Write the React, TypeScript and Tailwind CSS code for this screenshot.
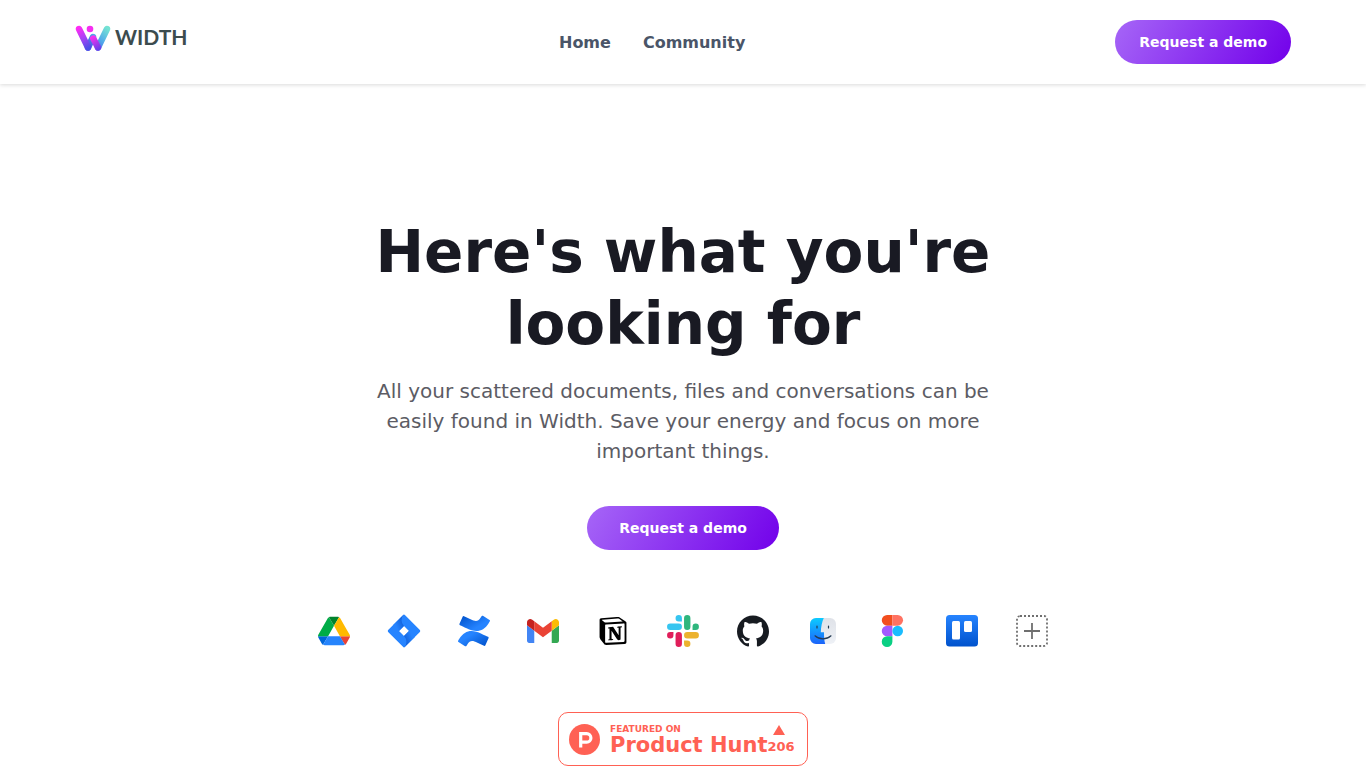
import { SiGithub, SiNotion } from "react-icons/si";

function WidthLogo() {
  return (
    <a href="#" aria-label="Width home" className="flex w-[114px] items-center gap-1 pb-2">
      <svg viewBox="0 0 36 28" className="h-7 w-9 shrink-0" fill="none" strokeLinecap="round" aria-hidden="true">
        <defs>
          <linearGradient id="logo-left" gradientUnits="userSpaceOnUse" x1="3" y1="4" x2="14" y2="24">
            <stop stopColor="#ff2bf4" />
            <stop offset="0.5" stopColor="#a743f5" />
            <stop offset="1" stopColor="#4a4ee6" />
          </linearGradient>
          <linearGradient id="logo-right" gradientUnits="userSpaceOnUse" x1="32" y1="4" x2="14" y2="24">
            <stop stopColor="#74e3d3" />
            <stop offset="0.5" stopColor="#51a9ea" />
            <stop offset="1" stopColor="#4b47e8" />
          </linearGradient>
          <linearGradient id="logo-middle" gradientUnits="userSpaceOnUse" x1="17" y1="13" x2="24" y2="25">
            <stop stopColor="#fb31ed" />
            <stop offset="1" stopColor="#693eea" />
          </linearGradient>
        </defs>
        <path d="M13 23.5 18 13" stroke="url(#logo-right)" strokeWidth="6.4" />
        <path d="M32 5 23 23.5" stroke="url(#logo-right)" strokeWidth="6.4" />
        <path d="M4 5 13 23.5" stroke="url(#logo-left)" strokeWidth="6.4" />
        <path d="M18.3 14.5 23 23.5" stroke="url(#logo-middle)" strokeWidth="6.4" />
        <circle cx="15" cy="5" r="3.3" fill="#f52ef0" />
      </svg>
      <span className="pb-0.5 font-['Lato',sans-serif] text-[21px] leading-6 font-bold text-[#3c4c4e]">WIDTH</span>
    </a>
  );
}

function DriveIcon() {
  return (
    <svg viewBox="0 0 87.3 78" className="size-8" role="img" aria-label="Google Drive">
      <path d="m6.6 66.85 3.85 6.65c.8 1.4 1.95 2.5 3.3 3.3l13.75-23.8h-27.5c0 1.55.4 3.1 1.2 4.5z" fill="#0066da" />
      <path d="m43.65 25-13.75-23.8c-1.35.8-2.5 1.9-3.3 3.3l-25.4 44a9.06 9.06 0 0 0 -1.2 4.5h27.5z" fill="#00ac47" />
      <path d="m73.55 76.8c1.35-.8 2.5-1.9 3.3-3.3l1.6-2.75 7.65-13.25c.8-1.4 1.2-2.95 1.2-4.5h-27.5l5.85 11.5z" fill="#ea4335" />
      <path d="m43.65 25 13.75-23.8c-1.35-.8-2.9-1.2-4.5-1.2h-18.5c-1.6 0-3.15.45-4.5 1.2z" fill="#00832d" />
      <path d="m59.8 53h-32.3l-13.75 23.8c1.35.8 2.9 1.2 4.5 1.2h50.8c1.6 0 3.15-.45 4.5-1.2z" fill="#2684fc" />
      <path d="m73.4 26.5-12.7-22c-.8-1.4-1.95-2.5-3.3-3.3l-13.75 23.8 16.15 28h27.45c0-1.55-.4-3.1-1.2-4.5z" fill="#ffba00" />
    </svg>
  );
}

function JiraIcon() {
  return (
    <svg viewBox="0 0 216.7 224" className="size-8 scale-105" role="img" aria-label="Jira">
      <defs>
        <linearGradient id="jira-a" x1="0.9" y1="0.35" x2="0.3" y2="0.75">
          <stop offset="0.1" stopColor="#1463dc" />
          <stop offset="1" stopColor="#2684ff" />
        </linearGradient>
        <linearGradient id="jira-b" x1="0.1" y1="0.65" x2="0.7" y2="0.25">
          <stop offset="0.1" stopColor="#1463dc" />
          <stop offset="1" stopColor="#2684ff" />
        </linearGradient>
      </defs>
      <path
        d="M214.06 105.73 117.67 9.34 108.33 0 2.59 105.73a8.89 8.89 0 0 0 0 12.54L108.33 224l105.73-105.68a8.87 8.87 0 0 0 0-12.59ZM108.33 145.12 75.21 112l33.12-33.12L141.44 112Z"
        fill="#2684ff"
      />
      <path d="M108.33 78.88A55.75 55.75 0 0 1 108.09.26L35.62 72.71l39.45 39.44Z" fill="url(#jira-a)" />
      <path d="m141.53 111.91-33.2 33.21a55.77 55.77 0 0 1 0 78.86l72.65-72.62Z" fill="url(#jira-b)" />
    </svg>
  );
}

const CONFLUENCE_WAVE =
  "M9.26 187.33c-2.64 4.31-5.61 9.3-8.13 13.29a8.100 8.100 0 0 0 2.720 11.050l52.830 32.510a8.130 8.130 0 0 0 11.250-2.770c2.120-3.530 4.840-8.120 7.810-13.040 20.920-34.540 41.970-30.310 79.920-12.190l52.380 24.910a8.130 8.130 0 0 0 10.930-4.070l25.150-56.880a8.130 8.130 0 0 0-4.060-10.650c-11.060-5.200-33.040-15.560-52.820-25.110C116.060 109.800 55.560 112.040 9.260 187.330Z";

function ConfluenceIcon() {
  return (
    <svg viewBox="0 0 256 246" className="size-8" role="img" aria-label="Confluence">
      <defs>
        <linearGradient id="confluence" x1="1" y1="0.9" x2="0.25" y2="0.3">
          <stop stopColor="#0052cc" />
          <stop offset="0.9" stopColor="#2684ff" />
        </linearGradient>
      </defs>
      <path d={CONFLUENCE_WAVE} fill="url(#confluence)" />
      <path d={CONFLUENCE_WAVE} fill="url(#confluence)" transform="rotate(180 128 123)" />
    </svg>
  );
}

function GmailIcon() {
  return (
    <svg viewBox="52 42 88 66" className="size-8" role="img" aria-label="Gmail">
      <path fill="#4285f4" d="M58 108h14V74L52 59v43c0 3.32 2.69 6 6 6" />
      <path fill="#34a853" d="M120 108h14c3.32 0 6-2.69 6-6V59l-20 15" />
      <path fill="#fbbc04" d="M120 48v26l20-15v-8c0-7.42-8.47-11.65-14.4-7.2" />
      <path fill="#ea4335" d="M72 74V48l24 18 24-18v26L96 92" />
      <path fill="#c5221f" d="M52 51v8l20 15V48l-5.6-4.2c-5.94-4.45-14.4-.22-14.4 7.2" />
    </svg>
  );
}

function SlackIcon() {
  return (
    <svg viewBox="0 0 53.8 54" className="size-8" role="img" aria-label="Slack">
      <path fill="#36c5f0" d="M19.712.133a5.381 5.381 0 0 0-5.376 5.387 5.381 5.381 0 0 0 5.376 5.386h5.376V5.52A5.381 5.381 0 0 0 19.712.133m0 14.365H5.376A5.381 5.381 0 0 0 0 19.884a5.381 5.381 0 0 0 5.376 5.387h14.336a5.381 5.381 0 0 0 5.376-5.387 5.381 5.381 0 0 0-5.376-5.386" />
      <path fill="#2eb67d" d="M53.76 19.884a5.381 5.381 0 0 0-5.376-5.386 5.381 5.381 0 0 0-5.376 5.386v5.387h5.376a5.381 5.381 0 0 0 5.376-5.387m-14.336 0V5.52A5.381 5.381 0 0 0 34.048.133a5.381 5.381 0 0 0-5.376 5.387v14.364a5.381 5.381 0 0 0 5.376 5.387 5.381 5.381 0 0 0 5.376-5.387" />
      <path fill="#ecb22e" d="M34.048 54a5.381 5.381 0 0 0 5.376-5.387 5.381 5.381 0 0 0-5.376-5.386h-5.376v5.386A5.381 5.381 0 0 0 34.048 54m0-14.365h14.336a5.381 5.381 0 0 0 5.376-5.386 5.381 5.381 0 0 0-5.376-5.387H34.048a5.381 5.381 0 0 0-5.376 5.387 5.381 5.381 0 0 0 5.376 5.386" />
      <path fill="#e01e5a" d="M0 34.249a5.381 5.381 0 0 0 5.376 5.386 5.381 5.381 0 0 0 5.376-5.386v-5.387H5.376A5.381 5.381 0 0 0 0 34.25m14.336-.001v14.364A5.381 5.381 0 0 0 19.712 54a5.381 5.381 0 0 0 5.376-5.387V34.25a5.381 5.381 0 0 0-5.376-5.387 5.381 5.381 0 0 0-5.376 5.387" />
    </svg>
  );
}

function FinderIcon() {
  return (
    <svg viewBox="0 0 32 32" className="size-8" role="img" aria-label="Finder">
      <defs>
        <linearGradient id="finder-face" x1="0" y1="0" x2="0" y2="1">
          <stop stopColor="#0cccff" />
          <stop offset="1" stopColor="#1c63fa" />
        </linearGradient>
        <linearGradient id="finder-side" x1="0" y1="0" x2="0" y2="1">
          <stop stopColor="#dfe2e8" />
          <stop offset="1" stopColor="#eef1f6" />
        </linearGradient>
      </defs>
      <rect x="3" y="3" width="26" height="26" rx="6" fill="url(#finder-side)" />
      <path d="M9 3h7.800c-1.800 4-2.800 8.500-3 14.200h3.200c-.1 4.500.3 8.500 1.200 11.800H9a6 6 0 0 1-6-6V9a6 6 0 0 1 6-6Z" fill="url(#finder-face)" />
      <path d="M10 11v2M21.500 11v2" stroke="#243b53" strokeWidth="1.200" strokeLinecap="round" />
      <path d="M8 20.800c4.500 4.200 11.500 4.200 16 0" fill="none" stroke="#243b53" strokeWidth="1.200" strokeLinecap="round" />
    </svg>
  );
}

function FigmaIcon() {
  return (
    <svg viewBox="0 0 32 32" className="size-8" role="img" aria-label="Figma">
      <path d="M11.100 0h5.300v10.670h-5.300a5.330 5.330 0 0 1 0-10.670Z" fill="#f24e1e" />
      <path d="M16.400 0h5.300a5.330 5.330 0 0 1 0 10.670h-5.300Z" fill="#ff7262" />
      <path d="M11.100 10.670h5.300v10.660h-5.300a5.330 5.330 0 0 1 0-10.660Z" fill="#a259ff" />
      <circle cx="21.700" cy="16" r="5.330" fill="#1abcfe" />
      <path d="M11.100 21.330h5.300v5.340a5.330 5.330 0 1 1-5.300-5.340Z" fill="#0acf83" />
    </svg>
  );
}

function TrelloIcon() {
  return (
    <svg viewBox="0 0 32 32" className="size-8" role="img" aria-label="Trello">
      <defs>
        <linearGradient id="trello" x1="0" y1="0" x2="0" y2="1">
          <stop stopColor="#2684ff" />
          <stop offset="1" stopColor="#0052cc" />
        </linearGradient>
      </defs>
      <rect width="32" height="31.500" rx="3.500" fill="url(#trello)" />
      <rect x="6" y="6" width="8" height="18.500" rx="1.500" fill="#fff" />
      <rect x="18" y="6" width="8" height="11" rx="1.500" fill="#fff" />
    </svg>
  );
}

function MoreIcon() {
  return (
    <svg viewBox="0 0 32 32" className="size-8" fill="none" stroke="#6f6f6f" role="img" aria-label="More integrations">
      <rect x="1" y="1" width="30" height="30" rx="3" strokeWidth="1.800" strokeDasharray="2 2" />
      <path d="M16 8v16M8 16h16" strokeWidth="1.800" />
    </svg>
  );
}

function ProductHuntBadge() {
  return (
    <a
      href="#"
      className="flex h-[54px] w-[250px] items-center rounded-[10px] border border-[#ff6154] pl-2.5 text-[#ff6154]"
    >
      <svg viewBox="0 0 31 31" className="mr-2.5 size-[31px] shrink-0" aria-hidden="true">
        <circle cx="15.500" cy="15.500" r="15.500" fill="currentColor" />
        <path d="M11.700 23.500V9.700h6a4.200 4.200 0 0 1 0 8.400h-6" fill="none" stroke="#fff" strokeWidth="3.200" />
      </svg>
      <span className="flex flex-col pt-0.5 font-bold">
        <span className="text-[9px] leading-[10px]">FEATURED ON</span>
        <span className="text-[21px] leading-[22px] whitespace-nowrap">Product Hunt</span>
      </span>
      <span className="flex flex-col items-center gap-1 pt-0.5 font-bold">
        <svg viewBox="0 0 12 10" className="mr-1 h-2.5 w-3" aria-hidden="true">
          <path d="M6 0 12 10H0Z" fill="currentColor" />
        </svg>
        <span className="text-[13px] leading-4">206</span>
      </span>
    </a>
  );
}

export default function App() {
  return (
    <div className="min-h-screen bg-white font-['DejaVu_Sans',sans-serif]">
      <header className="bg-white shadow-[0_1px_4px_rgba(0,0,0,0.15)]">
        <div className="mx-auto flex max-w-7xl items-center justify-between px-8 py-5">
          <WidthLogo />
          <nav className="flex gap-8 pt-0.5 font-bold text-[#4a5568]">
            <a href="#">Home</a>
            <a href="#">Community</a>
          </nav>
          <button
            type="button"
            className="h-11 rounded-full bg-[linear-gradient(120deg,#a666f7,#7200ea)] px-6 text-sm font-bold text-white"
          >
            Request a demo
          </button>
        </div>
      </header>
      <main className="flex flex-col items-center px-4 pt-[132px]">
        <h1 className="max-w-[640px] text-center text-[58px] leading-[72px] font-bold text-[#191a23]">
          Here's what you're looking for
        </h1>
        <p className="mt-4 max-w-[640px] text-center text-xl leading-[30px] text-[#5c5c64]">
          All your scattered documents, files and conversations can be easily found in Width. Save your energy and focus
          on more important things.
        </p>
        <button
          type="button"
          className="mt-10 h-11 rounded-full bg-[linear-gradient(120deg,#a666f7,#7200ea)] px-8 text-sm font-bold text-white"
        >
          Request a demo
        </button>
        <div className="mt-[65px] flex w-full max-w-[730px] items-center justify-between">
          <DriveIcon />
          <JiraIcon />
          <ConfluenceIcon />
          <GmailIcon />
          <SiNotion className="size-8 p-0.5 text-black" role="img" aria-label="Notion" />
          <SlackIcon />
          <SiGithub className="size-8 text-[#171b21]" role="img" aria-label="GitHub" />
          <FinderIcon />
          <FigmaIcon />
          <TrelloIcon />
          <MoreIcon />
        </div>
        <div className="mt-[65px]">
          <ProductHuntBadge />
        </div>
      </main>
    </div>
  );
}
